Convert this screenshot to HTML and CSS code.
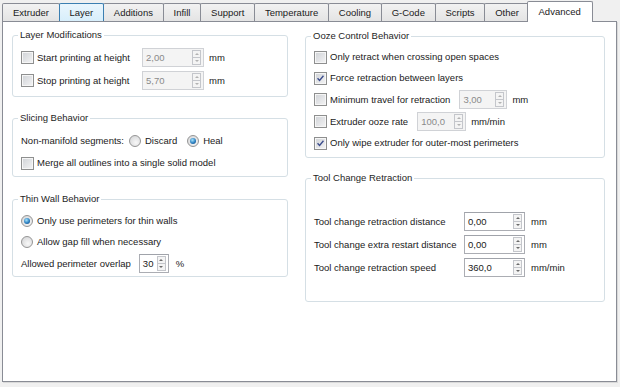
FILE: index.html
```html
<!DOCTYPE html>
<html lang="en">
<head>
    <meta charset="UTF-8">
    <title>Advanced</title>
    <link rel="stylesheet" href="styles.css">
</head>
<body>
    <div class="notebook">
        <div class="tabs">
            <div class="tab">Extruder</div>
            <div class="tab hover">Layer</div>
            <div class="tab">Additions</div>
            <div class="tab">Infill</div>
            <div class="tab">Support</div>
            <div class="tab">Temperature</div>
            <div class="tab">Cooling</div>
            <div class="tab">G-Code</div>
            <div class="tab">Scripts</div>
            <div class="tab">Other</div>
            <div class="tab active">Advanced</div>
        </div>

        <div class="page">
            <!-- left column -->
            <div class="col">
                <fieldset class="group layer-mods">
                    <legend>Layer Modifications</legend>
                    <div class="rows">
                        <div class="row">
                            <label class="check fixed"><span class="cb"></span>Start printing at height</label>
                            <span class="spin disabled w62"><span class="val">2,00</span><span class="arrows"><i class="up"></i><i class="down"></i></span></span>
                            <span class="unit">mm</span>
                        </div>
                        <div class="row">
                            <label class="check fixed"><span class="cb"></span>Stop printing at height</label>
                            <span class="spin disabled w62"><span class="val">5,70</span><span class="arrows"><i class="up"></i><i class="down"></i></span></span>
                            <span class="unit">mm</span>
                        </div>
                    </div>
                </fieldset>

                <fieldset class="group slicing">
                    <legend>Slicing Behavior</legend>
                    <div class="rows">
                        <div class="row">
                            <span class="text">Non-manifold segments:</span>
                            <label class="radio first"><span class="rb"></span>Discard</label>
                            <label class="radio second"><span class="rb on"></span>Heal</label>
                        </div>
                        <div class="row">
                            <label class="check"><span class="cb"></span>Merge all outlines into a single solid model</label>
                        </div>
                    </div>
                </fieldset>

                <fieldset class="group thin-wall">
                    <legend>Thin Wall Behavior</legend>
                    <div class="rows">
                        <div class="row">
                            <label class="radio"><span class="rb on"></span>Only use perimeters for thin walls</label>
                        </div>
                        <div class="row">
                            <label class="radio"><span class="rb"></span>Allow gap fill when necessary</label>
                        </div>
                        <div class="row">
                            <span class="text">Allowed perimeter overlap</span>
                            <span class="spin w30 gap8"><span class="val">30</span><span class="arrows"><i class="up"></i><i class="down"></i></span></span>
                            <span class="unit pct">%</span>
                        </div>
                    </div>
                </fieldset>
            </div>

            <!-- right column -->
            <div class="col">
                <fieldset class="group ooze">
                    <legend>Ooze Control Behavior</legend>
                    <div class="rows">
                        <div class="row">
                            <label class="check"><span class="cb"></span>Only retract when crossing open spaces</label>
                        </div>
                        <div class="row">
                            <label class="check"><span class="cb on"><svg viewBox="0 0 13 13"><path d="M3 6.3l2.4 2.6 4.6-5.6"/></svg></span>Force retraction between layers</label>
                        </div>
                        <div class="row">
                            <label class="check"><span class="cb"></span>Minimum travel for retraction</label>
                            <span class="spin disabled w48 gap9"><span class="val">3,00</span><span class="arrows"><i class="up"></i><i class="down"></i></span></span>
                            <span class="unit">mm</span>
                        </div>
                        <div class="row">
                            <label class="check"><span class="cb"></span>Extruder ooze rate</label>
                            <span class="spin disabled w49 gap9"><span class="val">100,0</span><span class="arrows"><i class="up"></i><i class="down"></i></span></span>
                            <span class="unit">mm/min</span>
                        </div>
                        <div class="row">
                            <label class="check"><span class="cb on"><svg viewBox="0 0 13 13"><path d="M3 6.3l2.4 2.6 4.6-5.6"/></svg></span>Only wipe extruder for outer-most perimeters</label>
                        </div>
                    </div>
                </fieldset>

                <fieldset class="group tool-change">
                    <legend>Tool Change Retraction</legend>
                    <div class="tool-grid">
                        <span class="text">Tool change retraction distance</span>
                        <span class="spin w61"><span class="val">0,00</span><span class="arrows"><i class="up"></i><i class="down"></i></span></span>
                        <span class="unit">mm</span>

                        <span class="text">Tool change extra restart distance</span>
                        <span class="spin w61"><span class="val">0,00</span><span class="arrows"><i class="up"></i><i class="down"></i></span></span>
                        <span class="unit">mm</span>

                        <span class="text">Tool change retraction speed</span>
                        <span class="spin w61"><span class="val">360,0</span><span class="arrows"><i class="up"></i><i class="down"></i></span></span>
                        <span class="unit">mm/min</span>
                    </div>
                </fieldset>
            </div>
        </div>
    </div>
</body>
</html>
```

FILE: styles.css
```css
* {
    box-sizing: border-box;
}
body {
    margin: 0;
    background-color: #f0f0f0;
    font-family: "Liberation Sans", Arial, sans-serif;
    font-size: 9.5px;
    line-height: 12px;
    color: #1a1a1a;
}
.notebook {
    width: 620px;
    height: 387px;
    padding: 0 3px 0 2px;
}

/* tabs */
.tabs {
    display: flex;
    align-items: flex-end;
    height: 21px;
}
.tab {
    height: 18px;
    padding: 3px 9.6px 0 10px;
    margin-right: -1px;
    border: 1px solid #898c95;
    border-bottom: none;
    border-radius: 2px 2px 0 0;
    background: linear-gradient(#f2f2f2, #e4e4e4);
    white-space: nowrap;
    color: #1a1a1a;
}
.tab.hover {
    position: relative;
    z-index: 1;
    border-color: #3c7fb1;
    background: linear-gradient(#eaf6fd, #d7eefb);
}
.tab.active {
    position: relative;
    z-index: 2;
    height: 21px;
    padding-top: 4px;
    margin: 0 -2px -1px -2px;
    padding-left: 11px;
    padding-right: 11px;
    background: #fff;
}

/* page */
.page {
    display: grid;
    grid-template-columns: 276px 300px;
    column-gap: 17px;
    align-items: start;
    height: 361px;
    padding: 7px 0 0 9px;
    border: 1px solid #898c95;
    background-color: #fff;
    box-shadow: 1px 1px 0 #d9d9d9;
}
.group {
    min-width: 0;
    margin: 0;
    padding: 7px 8px 5px;
    border: 1px solid #d5dfe5;
    border-radius: 3px;
}
.group legend {
    padding: 0 2px;
    margin-left: -3px;
    color: #1e1e1e;
}
.rows {
    display: flex;
    flex-direction: column;
    gap: 3px;
}
.row {
    display: flex;
    align-items: center;
    min-height: 18px;
    white-space: nowrap;
}

.layer-mods {
    padding-bottom: 6px;
}
.layer-mods .rows {
    gap: 4px;
}
.slicing {
    margin-top: 15px;
    padding-top: 8px;
    padding-bottom: 4px;
}
.slicing .rows {
    gap: 4px;
}
.thin-wall {
    margin-top: 16px;
    padding-bottom: 3px;
}
.ooze {
    margin-top: 1px;
    padding-top: 6px;
}
.tool-change {
    margin-top: 14px;
    padding-top: 28px;
    padding-bottom: 24px;
}
.tool-grid {
    display: grid;
    grid-template-columns: 150px 61px auto;
    grid-auto-rows: 19px;
    row-gap: 4px;
    align-items: center;
    white-space: nowrap;
}
.tool-grid .unit {
    margin-left: 6px;
}

/* checkbox */
.check,
.radio {
    display: flex;
    align-items: center;
}
.check.fixed {
    width: 121px;
}
.cb {
    display: inline-block;
    width: 13px;
    height: 13px;
    margin-right: 3px;
    border: 1px solid #8e8f8f;
    background: linear-gradient(135deg, #cfd2d6, #f4f4f5);
    box-shadow: inset 0 0 0 1px #f6f6f6;
}
.cb svg {
    display: block;
    width: 11px;
    height: 11px;
}
.cb path {
    fill: none;
    stroke: #3b4c8c;
    stroke-width: 1.6;
}

/* radio */
.rb {
    display: inline-block;
    position: relative;
    width: 12px;
    height: 12px;
    margin-right: 4px;
    border: 1px solid #959595;
    border-radius: 50%;
    background: radial-gradient(circle at 60% 65%, #f8f8f8, #d0d1d3);
}
.rb.on::after {
    content: "";
    position: absolute;
    left: 2px;
    top: 2px;
    width: 6px;
    height: 6px;
    border-radius: 50%;
    background: radial-gradient(circle at 40% 35%, #a6e4fb, #2b7fc1 55%, #0f3f70);
}
.radio.first {
    margin-left: 5px;
}
.radio.second {
    margin-left: 10px;
}

/* spin control */
.spin {
    display: inline-flex;
    align-items: center;
    height: 19px;
    padding: 0 2px 0 3px;
    border: 1px solid #abadb3;
    border-top-color: #a0a3aa;
    background-color: #fff;
}
.spin .val {
    flex: 1;
}
.spin .arrows {
    display: flex;
    flex-direction: column;
    width: 9px;
    height: 15px;
    border: 1px solid #c4c6cb;
    background: #f4f4f4;
}
.spin i {
    flex: 1;
    display: flex;
    align-items: center;
    justify-content: center;
}
.spin i.up {
    border-bottom: 1px solid #c4c6cb;
}
.spin i::before {
    content: "";
    border-left: 2px solid transparent;
    border-right: 2px solid transparent;
}
.spin i.up::before {
    border-bottom: 2px solid #6a6a6a;
}
.spin i.down::before {
    border-top: 2px solid #6a6a6a;
}
.spin.disabled {
    border-color: #d0d2d6;
    background-color: #f4f4f4;
    color: #8a8a8a;
}
.spin.disabled i.up::before {
    border-bottom-color: #b2b2b2;
}
.spin.disabled i.down::before {
    border-top-color: #b2b2b2;
}
.w30 { width: 30px; }
.w48 { width: 48px; }
.w49 { width: 49px; }
.w61 { width: 61px; }
.w62 { width: 62px; }
.gap8 { margin-left: 8px; }
.gap9 { margin-left: 9px; }
.unit {
    margin-left: 5px;
}
.unit.pct {
    margin-left: 7px;
}
```
